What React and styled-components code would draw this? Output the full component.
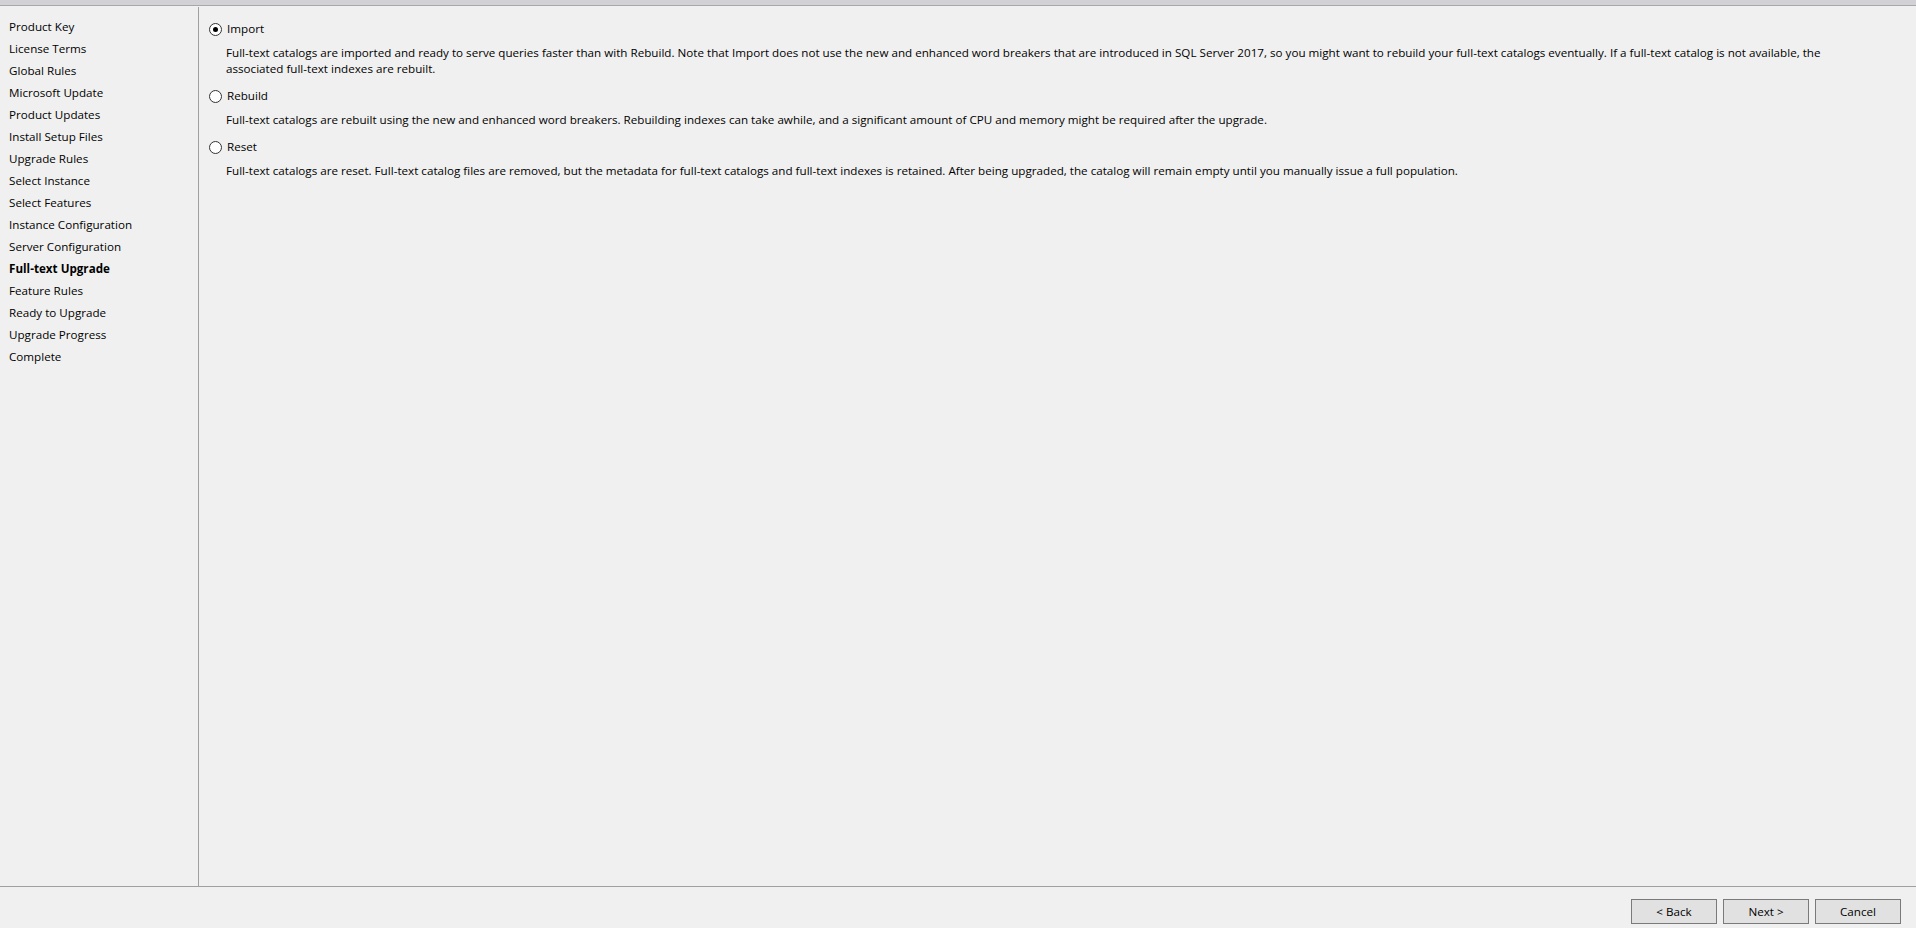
import { useState } from 'react'
import styled, { createGlobalStyle } from 'styled-components'

const GlobalStyle = createGlobalStyle`
    html, body {
        margin: 0;
        padding: 0;
        height: 100%;
        background: #f0f0f0;
        overflow: hidden;
    }
    #root {
        height: 100%;
    }
`

const Window = styled.div`
    height: 928px;
    display: flex;
    flex-flow: column;
    background: #f0f0f0;
    font-family: "Segoe UI", "Open Sans", "Noto Sans", sans-serif;
    font-size: 11.65px;
    color: #000;
    overflow: hidden;
`

const TopStrip = styled.div`
    height: 5px;
    flex: none;
    background: #d2d2d6;
    border-bottom: 1px solid #a7a7ae;
    margin-bottom: 1px;
`

const Body = styled.div`
    flex: 1;
    display: flex;
    min-height: 0;
`

const Sidebar = styled.ul`
    width: 199px;
    flex: none;
    margin: 0;
    padding: 9px 0 0 9px;
    box-sizing: border-box;
    list-style: none;
    border-right: 1px solid #a0a0a0;
`

const Step = styled.li`
    height: 22px;
    line-height: 22px;
    white-space: nowrap;
    font-weight: ${p => (p.$current ? 'bold' : 'normal')};
`

const Content = styled.div`
    flex: 1;
    padding: 14px 0 0 10px;
    display: flex;
    flex-flow: column;
`

const Option = styled.div`
    display: flex;
    flex-flow: column;
    margin-bottom: 11px;
`

const RadioRow = styled.label`
    display: flex;
    align-items: center;
    gap: 5px;
    height: 16px;
    line-height: 16px;
    cursor: default;
`

const RadioDot = styled.span`
    width: 11px;
    height: 11px;
    border-radius: 50%;
    border: 1px solid #333;
    background: #fff;
    display: flex;
    align-items: center;
    justify-content: center;
    box-sizing: content-box;

    &::after {
        content: '';
        width: 5px;
        height: 5px;
        border-radius: 50%;
        background: ${p => (p.$checked ? '#000' : 'transparent')};
    }
`

const Description = styled.p`
    margin: 8px 0 0 17px;
    line-height: 16px;
    white-space: nowrap;
`

const Footer = styled.div`
    height: 42px;
    flex: none;
    border-top: 1px solid #a0a0a0;
    display: flex;
    justify-content: flex-end;
    align-items: flex-start;
    gap: 6px;
    padding: 12px 15px 0 0;
    box-sizing: border-box;
`

const Button = styled.button`
    width: 86px;
    height: 25px;
    border: 1px solid #7a7a7a;
    background: #e1e1e1;
    font: inherit;
    color: #000;
    padding: 0;
    border-radius: 0;
    cursor: default;
`

const steps = [
    'Product Key',
    'License Terms',
    'Global Rules',
    'Microsoft Update',
    'Product Updates',
    'Install Setup Files',
    'Upgrade Rules',
    'Select Instance',
    'Select Features',
    'Instance Configuration',
    'Server Configuration',
    'Full-text Upgrade',
    'Feature Rules',
    'Ready to Upgrade',
    'Upgrade Progress',
    'Complete',
]

const options = [
    {
        id: 'import',
        label: 'Import',
        lines: [
            'Full-text catalogs are imported and ready to serve queries faster than with Rebuild. Note that Import does not use the new and enhanced word breakers that are introduced in SQL Server 2017, so you might want to rebuild your full-text catalogs eventually. If a full-text catalog is not available, the',
            'associated full-text indexes are rebuilt.',
        ],
    },
    {
        id: 'rebuild',
        label: 'Rebuild',
        lines: [
            'Full-text catalogs are rebuilt using the new and enhanced word breakers. Rebuilding indexes can take awhile, and a significant amount of CPU and memory might be required after the upgrade.',
        ],
    },
    {
        id: 'reset',
        label: 'Reset',
        lines: [
            'Full-text catalogs are reset. Full-text catalog files are removed, but the metadata for full-text catalogs and full-text indexes is retained. After being upgraded, the catalog will remain empty until you manually issue a full population.',
        ],
    },
]

function App() {
    const [choice, setChoice] = useState('import')

    return (
        <>
            <GlobalStyle />
            <Window>
                <TopStrip />
                <Body>
                    <Sidebar>
                        {steps.map(s => (
                            <Step key={s} $current={s === 'Full-text Upgrade'}>{s}</Step>
                        ))}
                    </Sidebar>
                    <Content>
                        {options.map(o => (
                            <Option key={o.id}>
                                <RadioRow onClick={() => setChoice(o.id)}>
                                    <RadioDot $checked={choice === o.id} />
                                    {o.label}
                                </RadioRow>
                                <Description>
                                    {o.lines.map((l, i) => (
                                        <span key={i}>{i > 0 && <br />}{l}</span>
                                    ))}
                                </Description>
                            </Option>
                        ))}
                    </Content>
                </Body>
                <Footer>
                    <Button>&lt; Back</Button>
                    <Button>Next &gt;</Button>
                    <Button>Cancel</Button>
                </Footer>
            </Window>
        </>
    )
}

export default App
